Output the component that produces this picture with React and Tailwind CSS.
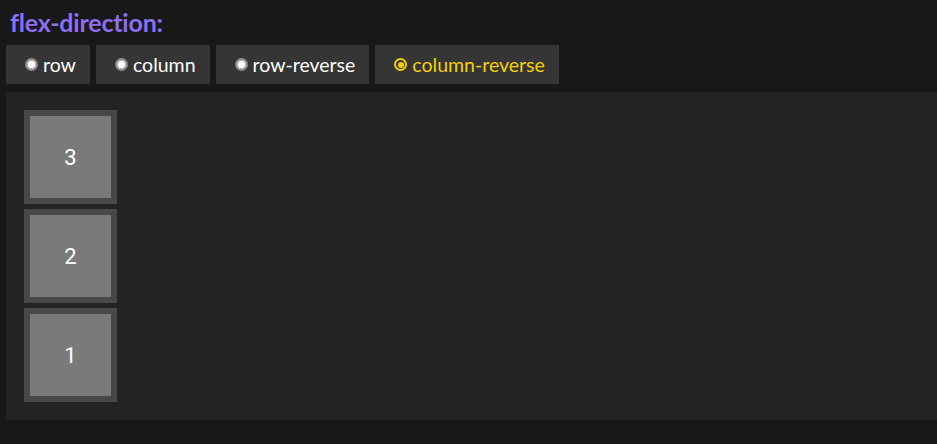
import React from "react";

const opts = ["row", "column", "row-reverse", "column-reverse"];

function Radio({ checked }) {
  if (checked) {
    return (
      <span className="w-[13px] h-[13px] shrink-0 rounded-full border-[2px] border-[#f5cf00] flex items-center justify-center">
        <span className="w-[6px] h-[6px] rounded-full bg-[#f5cf00]" />
      </span>
    );
  }
  return <span className="w-[13px] h-[13px] shrink-0 rounded-full bg-white border-[2px] border-[#8a8a8a] shadow-[inset_0_0_0_1px_#bdbdbd]" />;
}

export default function App() {
  return (
    <div className="w-[937px] h-[444px] bg-[#181818] overflow-hidden font-['Lato',sans-serif]">
      <div className="pt-[6px] pl-[10px] h-[45px]">
        <h1 className="text-[25px] leading-[32px] font-bold text-[#8b6ef2] tracking-[-0.2px]">flex-direction:</h1>
      </div>
      <div className="flex gap-[6px] pl-[6px]">
        {opts.map((o, i) => {
          const sel = i === 3;
          return (
            <div
              key={o}
              className={`h-[39px] bg-[#353535] flex items-center gap-[5px] pl-[19px] pr-[14px] text-[19.5px] ${sel ? "text-[#f5cf00]" : "text-white"}`}
            >
              <Radio checked={sel} />
              <span>{o}</span>
            </div>
          );
        })}
      </div>
      <div className="mt-[8px] ml-[6px] h-[328px] bg-[#232325] p-[18px] flex flex-col-reverse items-start justify-end gap-[5px]">
        {[1, 2, 3].map((n) => (
          <div key={n} className="w-[93px] h-[94px] bg-[#7a7a7a] border-[6px] border-[#484848] flex items-center justify-center text-white text-[22px] font-['Roboto',sans-serif]">
            {n}
          </div>
        ))}
      </div>
    </div>
  );
}
